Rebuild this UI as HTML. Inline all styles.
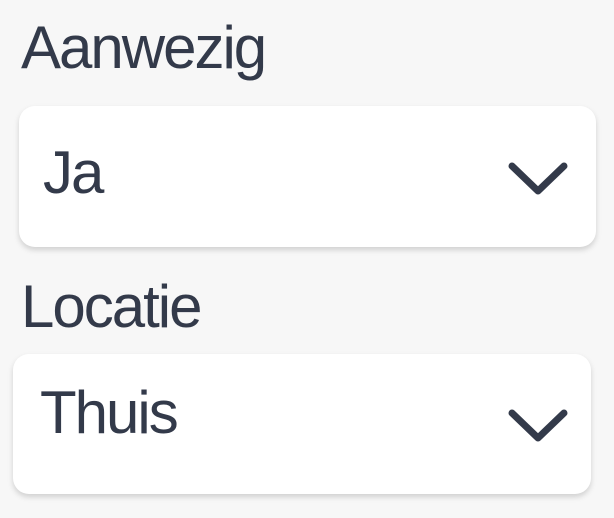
<!DOCTYPE html>
<html><head><meta charset="utf-8"><style>
html,body{margin:0;padding:0;background:#f7f7f7;width:614px;height:518px;overflow:hidden}
.box{position:absolute;background:#fff;border-radius:16px;box-shadow:0 3px 6px rgba(0,0,0,0.16)}
svg{position:absolute;left:0;top:0}
text{font-family:"Liberation Sans",sans-serif;font-size:60px;fill:#333a4a;letter-spacing:-2px}
</style></head><body>
<div class="box" style="left:19px;top:106px;width:577px;height:141px"></div>
<div class="box" style="left:13px;top:354px;width:578px;height:140px"></div>
<svg width="614" height="518" viewBox="0 0 614 518">
<text x="21" y="68">Aanwezig</text>
<text x="43" y="193">Ja</text>
<text x="21" y="327">Locatie</text>
<text x="40" y="433">Thuis</text>
<path d="M512 166 L538 191 L564 166" fill="none" stroke="#333a4a" stroke-width="7" stroke-linecap="round" stroke-linejoin="round"/>
<path d="M512 413 L538 438 L564 413" fill="none" stroke="#333a4a" stroke-width="7" stroke-linecap="round" stroke-linejoin="round"/>
</svg>
</body></html>
